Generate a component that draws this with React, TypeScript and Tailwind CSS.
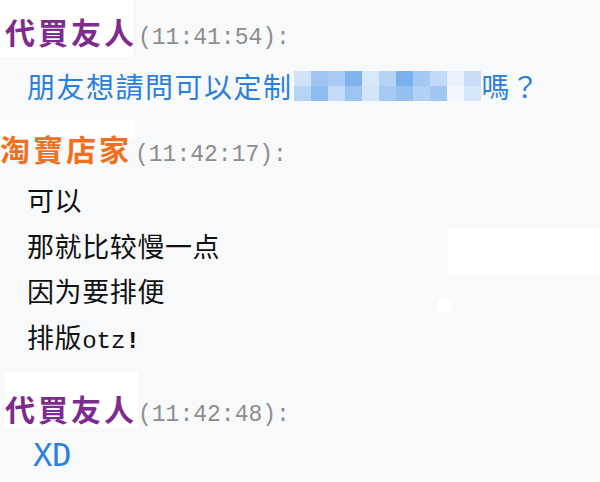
const CJK = '"Noto Sans CJK TC", "Noto Sans CJK SC", sans-serif'
const MONO = '"Liberation Mono", "DejaVu Sans Mono", monospace'

// mosaic over the hidden part of the first message
const MOSAIC = [
  ['#cfe2f8', '#9fc6f2', '#a9cbf3', '#7fb3ee', '#d8e8fa', '#b5d3f5', '#7ab0ee', '#a3c8f3', '#c2daf7', '#e9f2fc', '#c7ddf7'],
  ['#b8d4f5', '#8ebbf0', '#c4dbf7', '#9cc4f2', '#d2e5f9', '#a6caf3', '#93bff1', '#b2d1f5', '#a0c6f2', '#f2f7fd', '#d5e6f9'],
]

function Header({ name, time, color, box }: { name: string; time: string; color: string; box: string }) {
  return (
    <div className="flex items-baseline">
      <span
        className={`whitespace-nowrap font-bold text-[30px] leading-[30px] tracking-[3px] ${box}`}
        style={{ fontFamily: CJK, color }}
      >
        {name}
      </span>
      <span className="text-[23px] text-[#8d8d8d]" style={{ fontFamily: MONO }}>
        ({time}):
      </span>
    </div>
  )
}

function Mosaic() {
  return (
    <span className="inline-flex flex-col align-middle mx-[1px]">
      {MOSAIC.map((row, r) => (
        <span key={r} className="flex">
          {row.map((c, i) => (
            <span key={i} className="block h-[15px] w-[17px]" style={{ backgroundColor: c }} />
          ))}
        </span>
      ))}
    </span>
  )
}

export default function App() {
  return (
    <div className="relative h-[482px] w-[600px] overflow-hidden bg-[#f8f9fa]">
      <div className="absolute left-[448px] top-[228px] h-[47px] w-[152px] bg-white" />
      <div className="absolute left-[437px] top-[298px] h-[14px] w-[15px] bg-white" />

      <div className="relative flex flex-col">
        <div className="h-[60px]">
          <Header
            name="代買友人"
            time="11:41:54"
            color="#7d2b8e"
            box="inline-block w-[138px] bg-[linear-gradient(to_right,white_133px,transparent_133px)] pt-[16px] pb-[11px] pl-[5px]"
          />
        </div>

        <div
          className="flex h-[52px] items-center pl-[27px] text-[28px] tracking-[1.5px] text-[#2a80dc]"
          style={{ fontFamily: CJK }}
        >
          <span>朋友想請問可以定制</span>
          <Mosaic />
          <span>嗎？</span>
        </div>

        <div className="h-[65px] pt-[8px]">
          <Header
            name="淘寶店家"
            time="11:42:17"
            color="#f0701e"
            box="inline-block w-[135px] bg-[linear-gradient(to_bottom,white_17px,transparent_17px)] pt-[13px] pb-[4px]"
          />
        </div>

        <div
          className="flex flex-col pl-[27px] text-[27px] leading-[45.5px] tracking-[0.6px] text-[#111]"
          style={{ fontFamily: '"Noto Sans CJK SC", "Noto Sans CJK TC", sans-serif' }}
        >
          <span>可以</span>
          <span>那就比较慢一点</span>
          <span>因为要排便</span>
          <span>
            排版
            <span className="text-[24px] tracking-normal" style={{ fontFamily: MONO }}>
              otz<b>!</b>
            </span>
          </span>
        </div>

        <div className="h-[71px] pt-[8px]">
          <Header
            name="代買友人"
            time="11:42:48"
            color="#7d2b8e"
            box="inline-block w-[133px] ml-[5px] bg-white pt-[21px] pb-[5px]"
          />
        </div>

        <div className="flex h-[40px] items-center pl-[33px] text-[32px] text-[#2a80dc]" style={{ fontFamily: '"DejaVu Sans Mono", monospace' }}>
          XD
        </div>
      </div>
    </div>
  )
}
